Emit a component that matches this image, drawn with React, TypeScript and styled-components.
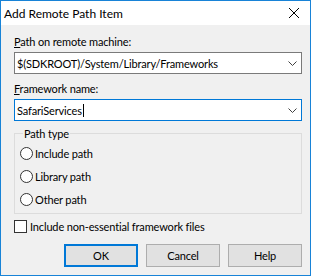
import React from "react";
import styled, { createGlobalStyle } from "styled-components";

const Global = createGlobalStyle`
  html, body { margin: 0; padding: 0; background: #ffffff; }
  * { box-sizing: border-box; }
`;

const FONT = `Lato, "Noto Sans", sans-serif`;

const Window = styled.div`
  width: 311px;
  height: 276px;
  border: 1px solid #1883d7;
  background: #f0f0f0;
  display: flex;
  flex-direction: column;
  font-family: ${FONT};
  font-size: 11px;
  letter-spacing: -0.15px;
  color: #000;
`;

const TitleBar = styled.div`
  height: 24px;
  background: #ffffff;
  display: flex;
  align-items: center;
  justify-content: space-between;
  padding-left: 3px;
`;

const Title = styled.span`
  font-size: 12px;
  letter-spacing: 0;
  line-height: 15px;
  margin-top: 1px;
`;

const CloseBox = styled.div`
  width: 30px;
  height: 24px;
  display: flex;
  align-items: center;
  justify-content: center;
  margin-right: 1px;
`;

const Body = styled.div`
  flex: 1;
  display: flex;
  flex-direction: column;
  padding: 9px 8px 0 13px;
`;

const Label = styled.div<{ $top?: number }>`
  line-height: 15px;
  height: 15px;
  margin-top: ${(p) => p.$top ?? 0}px;
  margin-bottom: 3px;
`;

const Combo = styled.div<{ $focused?: boolean }>`
  height: 22px;
  background: #fff;
  border: 1px solid ${(p) => (p.$focused ? "#0078d7" : "#7a7a7a")};
  display: flex;
  align-items: center;
  padding-left: 2px;
  padding-right: 4px;
`;

const ComboText = styled.span`
  flex: 1;
  line-height: 15px;
  display: flex;
  align-items: center;
`;

const Caret = styled.span`
  display: inline-block;
  width: 1px;
  height: 13px;
  background: #000;
  margin-left: 1px;
`;

const Fieldset = styled.fieldset`
  margin: 5px 0 0 0;
  padding: 1px 0 0 5px;
  border: 1px solid #dcdcdc;
  height: 88px;
  min-width: 0;
`;

const Legend = styled.legend`
  padding: 0 1px;
  margin-left: 3px;
  line-height: 15px;
`;

const OptionRow = styled.label`
  height: 23px;
  display: flex;
  align-items: center;
  gap: 2px;
`;

const RadioCircle = styled.span`
  width: 13px;
  height: 13px;
  border-radius: 50%;
  border: 1px solid #333;
  background: #fff;
  flex: none;
`;

const CheckRow = styled.label`
  display: flex;
  align-items: center;
  gap: 3px;
  margin-top: 6px;
  height: 13px;
`;

const CheckBox = styled.span`
  width: 13px;
  height: 13px;
  border: 1px solid #333;
  background: #fff;
  flex: none;
`;

const Buttons = styled.div`
  display: flex;
  justify-content: flex-end;
  gap: 8px;
  margin-top: 11px;
`;

const Button = styled.button<{ $default?: boolean }>`
  width: 74px;
  height: 23px;
  font-family: ${FONT};
  font-size: 11px;
  letter-spacing: -0.15px;
  color: #000;
  background: #e1e1e1;
  border: ${(p) => (p.$default ? "2px solid #0078d7" : "1px solid #adadad")};
  padding: 0;
  margin: 0;
  display: flex;
  align-items: center;
  justify-content: center;
`;

const U = styled.span`
  text-decoration: underline;
`;

const Chevron = () => (
  <svg width="9" height="5" viewBox="0 0 9 5">
    <path d="M0.5 0.5 L4.5 4.5 L8.5 0.5" fill="none" stroke="#404040" strokeWidth="1" />
  </svg>
);

const CloseIcon = () => (
  <svg width="10" height="10" viewBox="0 0 10 10">
    <path d="M0 0 L10 10 M10 0 L0 10" stroke="#000" strokeWidth="1" />
  </svg>
);

export default function App() {
  return (
    <>
      <Global />
      <Window>
        <TitleBar>
          <Title>Add Remote Path Item</Title>
          <CloseBox>
            <CloseIcon />
          </CloseBox>
        </TitleBar>
        <Body>
          <Label>
            <U>P</U>ath on remote machine:
          </Label>
          <Combo>
            <ComboText>$(SDKROOT)/System/Library/Frameworks</ComboText>
            <Chevron />
          </Combo>
          <Label $top={7}>
            <U>F</U>ramework name:
          </Label>
          <Combo $focused>
            <ComboText>
              SafariServices
              <Caret />
            </ComboText>
            <Chevron />
          </Combo>
          <Fieldset>
            <Legend>Path type</Legend>
            <OptionRow>
              <RadioCircle />
              Include path
            </OptionRow>
            <OptionRow>
              <RadioCircle />
              Library path
            </OptionRow>
            <OptionRow>
              <RadioCircle />
              Other path
            </OptionRow>
          </Fieldset>
          <CheckRow>
            <CheckBox />
            Include non-essential framework files
          </CheckRow>
          <Buttons>
            <Button $default>OK</Button>
            <Button>Cancel</Button>
            <Button>Help</Button>
          </Buttons>
        </Body>
      </Window>
    </>
  );
}
